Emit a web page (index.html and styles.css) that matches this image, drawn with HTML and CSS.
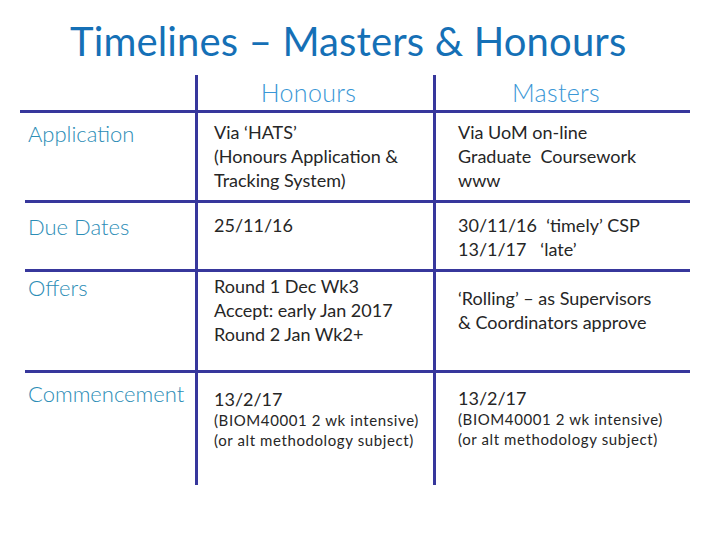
FILE: index.html
```html
<!DOCTYPE html>
<html>
<head>
<meta charset="utf-8">
<link rel="stylesheet" href="styles.css">
</head>
<body>
<div class="slide">
  <h1 class="title">Timelines – Masters &amp; Honours</h1>
  <div class="table">
    <div class="cell head blank"></div>
    <div class="cell head col2 vline">Honours</div>
    <div class="cell head col3 vline">Masters</div>

    <div class="cell label r1">Application</div>
    <div class="cell body vline col2 p7">Via ‘HATS’<br>(Honours Application &amp;<br>Tracking System)</div>
    <div class="cell body vline col3 p7">Via UoM on-line<br>Graduate&nbsp; Coursework<br>www</div>

    <div class="cell label r2">Due Dates</div>
    <div class="cell body vline col2 p10">25/11/16</div>
    <div class="cell body vline col3 p10">30/11/16&nbsp; ‘timely’ CSP<br>13/1/17&nbsp;&nbsp; ‘late’</div>

    <div class="cell label r3">Offers</div>
    <div class="cell body vline col2 p3">Round 1 Dec Wk3<br>Accept: early Jan 2017<br>Round 2 Jan Wk2+</div>
    <div class="cell body vline col3 p14">‘Rolling’ – as Supervisors<br>&amp; Coordinators approve</div>

    <div class="cell label r4 last">Commencement</div>
    <div class="cell body vline col2 p14 last">13/2/17<div class="small">(BIOM40001 2 wk intensive)<br>(or alt methodology subject)</div></div>
    <div class="cell body vline col3 p13 last">13/2/17<div class="small">(BIOM40001 2 wk intensive)<br>(or alt methodology subject)</div></div>
  </div>
</div>
</body>
</html>
```

FILE: styles.css
```css
html, body {
  margin: 0;
  padding: 0;
  background: #ffffff;
}
.slide {
  width: 720px;
  height: 540px;
  font-family: Lato, "Open Sans", sans-serif;
  overflow: hidden;
}
.title {
  margin: 0;
  padding: 17px 0 0 70px;
  height: 58px;
  font-size: 40px;
  line-height: 48px;
  font-weight: 400;
  color: #1570b6;
  letter-spacing: 0.15px;
  white-space: nowrap;
}
.table {
  display: grid;
  grid-template-columns: 170px 238px 257px;
  grid-template-rows: 38px 90px 69px 101px 112px;
  margin-left: 25px;
}
.cell {
  box-sizing: border-box;
  border-bottom: 3px solid #37379c;
}
.cell.last {
  border-bottom: none;
}
.head.blank {
  margin-left: -5px;
}
.vline {
  border-left: 3px solid #37379c;
}
.head {
  font-size: 25px;
  line-height: 30px;
  font-weight: 300;
  color: #3a97d6;
  text-align: center;
  letter-spacing: 0.3px;
  padding: 2px 14px 0 0;
}
.label {
  font-size: 22px;
  line-height: 28px;
  font-weight: 300;
  color: #2c8db6;
  padding-left: 3px;
  white-space: nowrap;
}
.r1 { padding-top: 7px; }
.r2 { padding-top: 10px; }
.r3 { padding-top: 2px; }
.r4 { padding-top: 7px; }
.body {
  font-size: 18px;
  line-height: 24px;
  color: #262626;
  white-space: nowrap;
}
.col2.body { padding-left: 16px; }
.col3.body { padding-left: 22px; }
.p3 { padding-top: 2px; }
.p7 { padding-top: 7px; }
.p10 { padding-top: 10px; }
.p13 { padding-top: 13px; }
.p14 { padding-top: 14px; }
.small {
  font-size: 15px;
  line-height: 20px;
  letter-spacing: 0.6px;
  margin-top: -1px;
}
```
